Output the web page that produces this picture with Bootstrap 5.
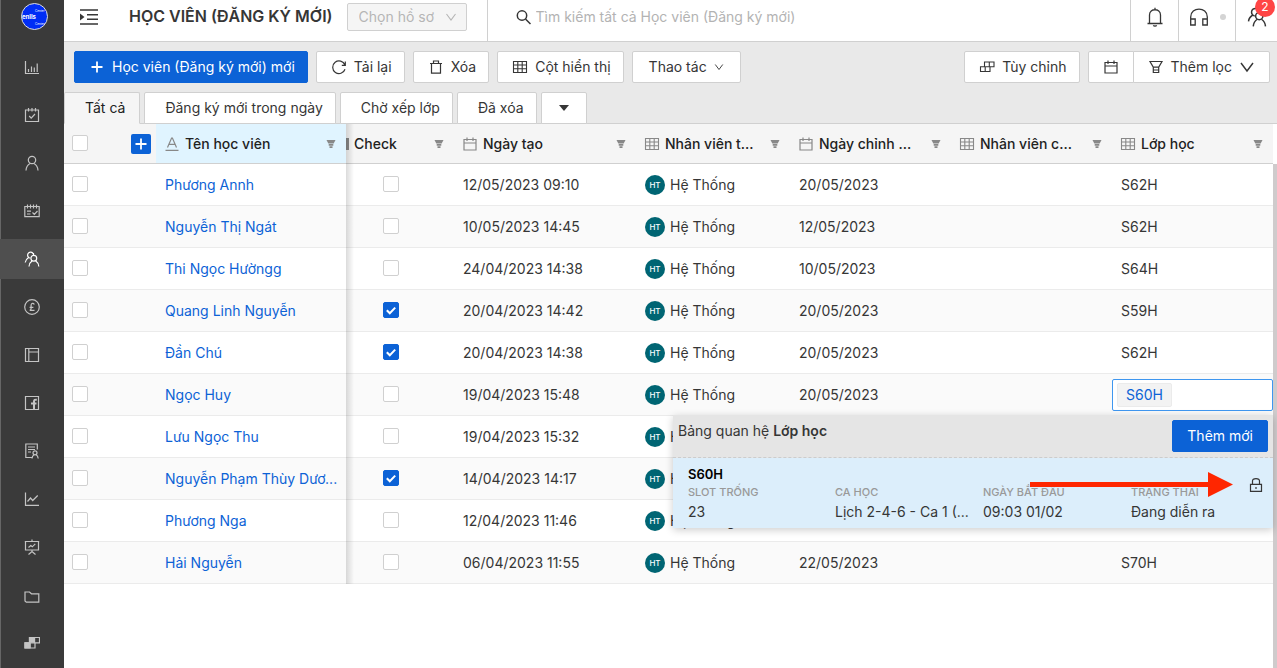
<!DOCTYPE html>
<html lang="vi">
<head>
<meta charset="utf-8">
<meta name="viewport" content="width=device-width, initial-scale=1">
<title>Học viên (Đăng ký mới)</title>
<link href="https://cdn.jsdelivr.net/npm/bootstrap@5.3.0/dist/css/bootstrap.min.css" rel="stylesheet">
<style>
  :root { --main-blue: #0c62d6; --line: #d0d0d0; --ink: #363636; }
  body { font-family: Inter, "Liberation Sans", sans-serif; font-size: 14px; line-height: 20px; color: var(--ink); background: #fff; }
  .ico { width: 16px; height: 16px; flex: none; fill: none; stroke: currentColor; stroke-width: 1.2; display: block; }
  .ico-sm { width: 10px; height: 10px; }
  .ico-lg { width: 20px; height: 20px; }
  .fill-rest { min-width: 0; }

  .side { width: 64px; background: #3a3a3a; box-shadow: inset 1px 0 #666; flex: none; }
  .side-logo { height: 47px; padding-top: 3px; flex: none; }
  .side-link { height: 40px; margin-bottom: 8px; color: #c4c4c4; flex: none; }
  .side-link.active { background: #4f4f4f; color: #fff; }
  .side-link:hover { color: #fff; }

  .top-bar { height: 42px; border-bottom: 1px solid var(--line); }
  .top-bar > * { padding-bottom: 8px; }
  .top-title { font-size: 16px; font-weight: 600; margin: 0 14px 0 31px; white-space: nowrap; }
  .record-pick { width: 120px; height: 28px; border: 1px solid var(--line); border-radius: 2px; background: #f5f5f5; color: #b5b5b5; appearance: none; padding: 0 11px; font-size: 14px; line-height: 24px; opacity: 1; }
  .pick-arrow { position: absolute; right: 10px; top: 8px; color: #b5b5b5; width: 12px; height: 12px; }
  .search-box { border: 0; outline: 0; color: var(--ink); background: none; }
  .search-box::placeholder { color: #b3b3b3; opacity: 1; }
  .cell-left { border-left: 1px solid var(--line); }
  .top-btn { background: none; border-width: 0 0 0 1px; border-style: solid; border-color: var(--line); color: var(--ink); padding: 0 0 8px; width: 48px; }
  .top-btn-wide { width: 57px; padding-left: 10px; gap: 11px; }
  .top-btn-last { width: 42px; }
  .count { position: absolute; top: -3px; right: 2px; width: 20px; height: 20px; border-radius: 50%; background: #ff4545; color: #fff; font-size: 12px; line-height: 20px; text-align: center; }
  .dot { width: 6px; height: 6px; border-radius: 50%; background: #d4d4d4; }

  .tools { background: #e9e9e9; padding: 9px 7px 0 10px; }
  .tabs { background: #e9e9e9; padding-top: 9px; border-bottom: 1px solid var(--line); }
  .btn.tool { --bs-btn-font-size: 14px; --bs-btn-line-height: 20px; --bs-btn-padding-y: 5px; --bs-btn-padding-x: 14px; --bs-btn-border-radius: 2px; --bs-btn-bg: #fff; --bs-btn-color: var(--ink); --bs-btn-border-color: var(--line); display: inline-flex; align-items: center; gap: 7px; white-space: nowrap; height: 32px; }
  .btn.tool-main { --bs-btn-bg: var(--main-blue); --bs-btn-color: #fff; --bs-btn-border-color: var(--main-blue); }
  .tools > .btn.tool { padding-right: 12px; }
  .tab { height: 32px; margin-bottom: -1px; padding: 0 12px 0 20px; background: #fff; border: 1px solid var(--line); border-radius: 2px 2px 0 0; color: var(--ink); white-space: nowrap; }
  .tab.active { background: #f5f5f5; border-bottom-color: #f5f5f5; color: #222; padding-right: 14px; }

  .data { table-layout: fixed; width: 100%; border-collapse: separate; border-spacing: 0; }
  .data th { height: 40px; padding: 0 10px 0 8px; background: #f5f5f5; border-bottom: 1px solid var(--line); color: #222; font-weight: 500; white-space: nowrap; }
  .th-in { display: flex; align-items: center; gap: 5px; }
  .data td { height: 42px; padding: 0 9px; border-bottom: 1px solid #ebebeb; white-space: nowrap; position: relative; }
  .data tbody tr:nth-child(even) td { background: #fafafa; }
  .data .pinned { position: relative; }
  .data .pinned::after { content: ""; position: absolute; left: 100%; top: 0; bottom: -1px; width: 8px; background: linear-gradient(to right, rgba(0,0,0,.14), rgba(0,0,0,0)); z-index: 1; }
  .data th.pinned { background: #e0f4ff; }
  .data th.pick-all { padding-right: 5px; }
  .data td.check-cell { padding-left: 37px; }
  .data td a { color: var(--main-blue); text-decoration: none; }
  .data th .ico { color: #888; }
  .tick { appearance: none; width: 16px; height: 16px; border: 1px solid var(--line); border-radius: 2px; background: #fff; display: block; margin: 0 0 1px; }
  .tick:checked { border-color: var(--main-blue); background: var(--main-blue) url("data:image/svg+xml,%3Csvg xmlns='http://www.w3.org/2000/svg' viewBox='0 0 14 14'%3E%3Cpath d='M2.8 7.2l3 3L11.200 4.600' fill='none' stroke='white' stroke-width='2'/%3E%3C/svg%3E"); }
  .add-col { width: 20px; height: 20px; padding: 2px; background: var(--main-blue); color: #fff; border: 0; border-radius: 2px; }
  .data th .add-col .ico { color: #fff; }
  .cut { width: 3px; height: 12px; background: #888; }
  .who { width: 20px; height: 20px; border-radius: 50%; background: #006573; color: #fff; font-size: 8px; font-weight: 500; line-height: 20px; text-align: center; margin-right: 5px; }
  .thumb { width: 4px; flex: none; background: #cfcbcc; margin-top: 40px; }

  .data td.editing { padding: 0; }
  .edit-box { height: 32px; border: 1px solid #3f97f0; border-radius: 2px; background: #fff; padding: 3px 4px; }
  .pill { height: 24px; padding: 0 8px; border: 1px solid #ebebeb; border-radius: 2px; background: #f3f3f3; color: var(--main-blue); line-height: 22px; }
  .relation { position: absolute; right: 0; top: 100%; width: 600px; z-index: 5; box-shadow: 0 2px 8px rgba(0,0,0,.2); }
  .relation-top { height: 43px; padding: 5px; background: #e5e5e5; border-bottom: 1px dashed #ccc; }
  .relation-title { line-height: 22px; }
  .relation-item { height: 70px; padding: 6px 0 0 15px; background: #dceefb; position: relative; }
  .item-name { font-size: 13px; font-weight: 600; color: #000; }
  .item-grid { display: grid; grid-template-columns: 147px 148px 148px 1fr; }
  .item-label { font-size: 11px; line-height: 16px; font-weight: 500; color: #999; text-transform: uppercase; }
  .item-value { line-height: 24px; }
  .lock { position: absolute; right: 9px; top: 19px; }
  .pointer { position: absolute; right: 40px; top: 14px; width: 203px; height: 25px; }
</style>
</head>
<body>
<svg class="d-none" aria-hidden="true">
  <symbol id="i-bars" viewBox="0 0 16 16"><path d="M1.500 2v12.500H15M4.500 10v3M7.500 7.500V13M10.300 8.500V13M13.200 4.500V13"/></symbol>
  <symbol id="i-calcheck" viewBox="0 0 16 16"><path d="M1.500 3h13v11.500h-13zM4.500 1v3.500M8 1v3.500M11.500 1v3.500M5.200 9l2 2.200L11 7"/></symbol>
  <symbol id="i-user" viewBox="0 0 16 16"><circle cx="8" cy="5" r="3.700"/><path d="M2 15.500c.2-4 2.200-6 4.200-7M14 15.500c-.2-4-2.200-6-4.200-7"/></symbol>
  <symbol id="i-sched" viewBox="0 0 16 16"><path d="M.8 3.500h14.400v10.200H.8zM3.500 1.500v4M6.500 1.500v4M9.500 1.500v4M12.500 1.500v4M3 8.200h4M3 11h3.500M8.500 9.500l1.800 1.800L13.500 8"/></symbol>
  <symbol id="i-users" viewBox="0 0 16 16"><circle cx="9.800" cy="7.200" r="2.900"/><path d="M5 15.500c.2-2.600 1.500-4.500 3.200-5.700M14.800 15.500c-.2-2.600-1.500-4.500-3.200-5.700M9.200 2.600C8 .8 6 .8 4.800 1.700 3.300 2.900 3.200 5 4.600 6.400 2.700 7.600 1.500 9 1.200 11.500M9.500 4V2M4.600 6.400c.6.500 1 .7 1.600.8"/></symbol>
  <symbol id="i-pound" viewBox="0 0 16 16"><circle cx="8" cy="8" r="7.300"/><path d="M10.300 5.400C9.600 4 7.200 4 7.100 6v3.500c0 1-.4 1.500-1.300 1.900h4.700M5.600 8.300h3.800"/></symbol>
  <symbol id="i-layout" viewBox="0 0 16 16"><path d="M1.500 1.500h13v13h-13zM4.800 1.500v13M4.800 5h9.700"/></symbol>
  <symbol id="i-fb" viewBox="0 0 16 16"><path d="M1.500 1.500h13v13h-13z"/><path d="M10 14V6.500c0-1.500.8-2 2.800-1.800M7 8.500h5.500" stroke-width="2"/></symbol>
  <symbol id="i-cert" viewBox="0 0 16 16"><path d="M8 14.500H1.800V1h11.500v5.500M4 4h7M4 6.500h7M4 9h3"/><circle cx="11" cy="9.800" r="2"/><path d="M8 15.500c.2-2 1-3 2-3.700M14.200 15.500c-.2-2-1-3-2-3.700"/></symbol>
  <symbol id="i-line" viewBox="0 0 16 16"><path d="M1.500 1.500v12.800H15M3.500 10.500l3-3.500 2.200 2.500 5-5"/></symbol>
  <symbol id="i-board" viewBox="0 0 16 16"><path d="M.8 2.500h14.400M1.500 2.500v8.500h13V2.500M8 .5v2M8 11v2M4.500 15.500L8 12.500l3.500 3M4.500 8.500l2.300-2 1.500 1.300 3-3"/></symbol>
  <symbol id="i-folder" viewBox="0 0 16 16"><path d="M1 5h4.500L7.500 6.800h7.300v8.400H2.300L1 14z"/></symbol>
  <symbol id="i-blocks" viewBox="0 0 16 16"><path d="M5.500 2.500h10v5.300h-4.500v5.200h-10V7.800h4.500zM10.500 2.500v5.300M6 7.800v5.200"/><path d="M5.500 2.500h5v5.300h-5zM1 7.800h5v5.200H1z" fill="currentColor"/></symbol>
  <symbol id="i-custom" viewBox="0 0 16 16"><path d="M5.500 3h9.500v4.800h-4v4.700H1.500V7.800h4zM10.300 3v4.800M6.200 7.800v4.700M5.500 7.800H11" stroke-width="1.100"/></symbol>
  <symbol id="i-plus" viewBox="0 0 16 16"><path d="M8 2.500v11M2.500 8h11" stroke-width="1.800"/></symbol>
  <symbol id="i-reload" viewBox="0 0 16 16"><path d="M13.900 6A6.300 6.300 0 1 0 14 10.200M14.300 2.500v3.800h-3.500"/></symbol>
  <symbol id="i-trash" viewBox="0 0 16 16"><path d="M2 4.500h12M3.500 4.500v9.700h9V4.500M5.500 4.200V2h5v2.200"/></symbol>
  <symbol id="i-grid" viewBox="0 0 16 16"><path d="M1.500 2.500h13v11h-13zM1.500 6h13M1.500 9.800h13M5.800 2.500v11M10.200 2.500v11" stroke-width="1.100"/></symbol>
  <symbol id="i-cal" viewBox="0 0 16 16"><path d="M2 3.500h12v10.500H2zM2 7h12M5 1.500v3.500M11 1.500v3.500"/></symbol>
  <symbol id="i-down" viewBox="0 0 12 12"><path d="M1.500 3L6 9l4.500-6" stroke-width="1.100"/></symbol>
  <symbol id="i-funnel" viewBox="0 0 16 16"><path d="M2 2.500h12l-3.300 5.700v5.300H5.300V8.200zM5.300 8.200h5.400M5.300 11h5.400"/></symbol>
  <symbol id="i-filter" viewBox="0 0 10 10"><path d="M.5 1h9L7.700 4.500H2.300zM2.700 5h4.600v1.800H2.700zM3.500 7.200h3V9h-3z" fill="#888" stroke="none"/></symbol>
  <symbol id="i-lock" viewBox="0 0 16 16"><path d="M2.500 7.300h11v7h-11zM4.500 7V4c0-3.200 7-3.200 7 0v3M8 10v2"/></symbol>
  <symbol id="i-text" viewBox="0 0 16 16"><path d="M1.500 14.300h13M3.500 11.500L7.600 2h.8l4.100 9.500M5 8.300h6"/></symbol>
</svg>

<div class="d-flex vh-100 overflow-hidden">
  <nav class="side d-flex flex-column" aria-label="Điều hướng">
    <a class="side-logo d-flex justify-content-center align-items-start mb-0" href="#" aria-label="enlls">
      <svg class="ms-1" width="27" height="27" viewBox="0 0 27 27"><circle cx="13.500" cy="13.500" r="13" fill="#002df5" stroke="#ddd"/><text x="1" y="16" font-size="6" font-weight="700" fill="#fff">enlls</text><text x="14" y="8.500" font-size="3" fill="#fff">Center</text><text x="14" y="21.500" font-size="3" fill="#fff">Center</text></svg>
    </a>
    <a class="side-link d-flex align-items-center justify-content-center" href="#" aria-label="Thống kê"><svg class="ico"><use href="#i-bars"/></svg></a>
    <a class="side-link d-flex align-items-center justify-content-center" href="#" aria-label="Công việc"><svg class="ico"><use href="#i-calcheck"/></svg></a>
    <a class="side-link d-flex align-items-center justify-content-center" href="#" aria-label="Cá nhân"><svg class="ico"><use href="#i-user"/></svg></a>
    <a class="side-link d-flex align-items-center justify-content-center" href="#" aria-label="Lịch"><svg class="ico"><use href="#i-sched"/></svg></a>
    <a class="side-link active d-flex align-items-center justify-content-center" href="#" aria-label="Học viên"><svg class="ico"><use href="#i-users"/></svg></a>
    <a class="side-link d-flex align-items-center justify-content-center" href="#" aria-label="Học phí"><svg class="ico"><use href="#i-pound"/></svg></a>
    <a class="side-link d-flex align-items-center justify-content-center" href="#" aria-label="Bố cục"><svg class="ico"><use href="#i-layout"/></svg></a>
    <a class="side-link d-flex align-items-center justify-content-center" href="#" aria-label="Facebook"><svg class="ico"><use href="#i-fb"/></svg></a>
    <a class="side-link d-flex align-items-center justify-content-center" href="#" aria-label="Chứng chỉ"><svg class="ico"><use href="#i-cert"/></svg></a>
    <a class="side-link d-flex align-items-center justify-content-center" href="#" aria-label="Biểu đồ"><svg class="ico"><use href="#i-line"/></svg></a>
    <a class="side-link d-flex align-items-center justify-content-center" href="#" aria-label="Báo cáo"><svg class="ico"><use href="#i-board"/></svg></a>
    <a class="side-link d-flex align-items-center justify-content-center" href="#" aria-label="Tài liệu"><svg class="ico"><use href="#i-folder"/></svg></a>
    <a class="side-link d-flex align-items-center justify-content-center" href="#" aria-label="Ứng dụng"><svg class="ico"><use href="#i-blocks"/></svg></a>
  </nav>

  <main class="fill-rest d-flex flex-column flex-grow-1">
    <header class="top-bar d-flex flex-shrink-0">
      <div class="d-flex align-items-center ps-3">
        <button class="btn p-0 border-0 rounded-0" type="button" aria-label="Mở menu"><svg width="18" height="16" viewBox="0 0 18 16" class="d-block"><path d="M0 1h18M7 5.700h11M7 10.300h11M0 15h18" stroke="#363636" stroke-width="1.500"/><path d="M0 4.500L4.500 8 0 11.500z" fill="#363636"/></svg></button>
        <h1 class="top-title">HỌC VIÊN (ĐĂNG KÝ MỚI)</h1>
        <div class="position-relative me-3">
          <label class="visually-hidden" for="pick">Hồ sơ</label>
          <select class="record-pick d-block" id="pick" disabled><option>Chọn hồ sơ</option></select>
          <svg class="ico pick-arrow"><use href="#i-down"/></svg>
        </div>
      </div>
      <div class="cell-left d-flex align-items-center flex-grow-1 ms-1 ps-4">
        <label class="ms-1 me-1" for="find" aria-label="Tìm kiếm"><svg class="ico"><circle cx="6" cy="6.500" r="4.700" stroke-width="1.500"/><path d="M9.500 10l5 5" stroke-width="1.500"/></svg></label>
        <input class="search-box flex-grow-1 p-0" id="find" type="text" placeholder="Tìm kiếm tất cả Học viên (Đăng ký mới)">
      </div>
      <button class="top-btn" type="button" aria-label="Thông báo"><svg width="16" height="20" viewBox="0 0 16 20" class="d-block mx-auto" fill="none" stroke="currentColor" stroke-width="1.300"><path d="M.5 16.500h15M2.500 16.500V8c0-7 11-7 11 0v8.500M8 2.800V.8M6.300 18.300c.7 1 2.700 1 3.400 0"/></svg></button>
      <button class="top-btn top-btn-wide d-flex align-items-center" type="button" aria-label="Hỗ trợ"><svg width="20" height="18" viewBox="0 0 20 18" fill="none" stroke="currentColor" stroke-width="1.300"><path d="M1.700 17V9c0-10.500 16.600-10.500 16.600 0v8M1.700 11h4.500v6H1.700zM13.800 11h4.500v6h-4.500z"/></svg><span class="dot"></span></button>
      <button class="top-btn top-btn-last position-relative" type="button" aria-label="2 yêu cầu"><svg class="ico ico-lg mx-auto"><use href="#i-users"/></svg><span class="count">2</span></button>
    </header>

    <div class="tools d-flex gap-2">
      <button class="btn tool tool-main" type="button"><svg class="ico"><use href="#i-plus"/></svg>Học viên (Đăng ký mới) mới</button>
      <button class="btn tool" type="button"><svg class="ico"><use href="#i-reload"/></svg>Tải lại</button>
      <button class="btn tool" type="button"><svg class="ico"><use href="#i-trash"/></svg>Xóa</button>
      <button class="btn tool" type="button"><svg class="ico"><use href="#i-grid"/></svg>Cột hiển thị</button>
      <button class="btn tool px-3" type="button">Thao tác<svg class="ico ico-sm"><use href="#i-down"/></svg></button>
      <button class="btn tool ms-auto" type="button"><svg class="ico"><use href="#i-custom"/></svg>Tùy chỉnh</button>
      <div class="btn-group">
        <button class="btn tool" type="button" aria-label="Chọn ngày"><svg class="ico"><use href="#i-cal"/></svg></button>
        <button class="btn tool" type="button"><svg class="ico"><use href="#i-funnel"/></svg>Thêm lọc<svg class="ico"><use href="#i-down"/></svg></button>
      </div>
    </div>
    <div class="tabs d-flex gap-1">
      <button class="tab active" type="button">Tất cả</button>
      <button class="tab" type="button">Đăng ký mới trong ngày</button>
      <button class="tab" type="button">Chờ xếp lớp</button>
      <button class="tab" type="button">Đã xóa</button>
      <button class="tab px-3" type="button" aria-label="Thêm tab"><svg width="12" height="6" viewBox="0 0 12 6" class="d-block"><path d="M1 0h10L6 6z" fill="#363636"/></svg></button>
    </div>

    <div class="d-flex flex-grow-1">
      <div class="fill-rest flex-grow-1">
        <table class="data">
          <colgroup><col style="width:92px"><col style="width:190px"><col style="width:108px"><col style="width:182px"><col style="width:154px"><col style="width:161px"><col style="width:161px"><col></colgroup>
          <thead>
            <tr>
              <th class="pick-all"><div class="d-flex align-items-center justify-content-between"><input class="tick" type="checkbox" aria-label="Chọn tất cả"><button class="add-col" type="button" aria-label="Thêm"><svg class="ico"><use href="#i-plus"/></svg></button></div></th>
              <th class="pinned"><div class="th-in"><svg class="ico"><use href="#i-text"/></svg>Tên học viên<svg class="ico ico-sm ms-auto"><use href="#i-filter"/></svg></div></th>
              <th class="ps-0"><div class="th-in"><span class="cut"></span>Check<svg class="ico ico-sm ms-auto"><use href="#i-filter"/></svg></div></th>
              <th><div class="th-in"><svg class="ico"><use href="#i-cal"/></svg>Ngày tạo<svg class="ico ico-sm ms-auto"><use href="#i-filter"/></svg></div></th>
              <th><div class="th-in"><svg class="ico"><use href="#i-grid"/></svg>Nhân viên t...<svg class="ico ico-sm ms-auto"><use href="#i-filter"/></svg></div></th>
              <th><div class="th-in"><svg class="ico"><use href="#i-cal"/></svg>Ngày chỉnh ...<svg class="ico ico-sm ms-auto"><use href="#i-filter"/></svg></div></th>
              <th><div class="th-in"><svg class="ico"><use href="#i-grid"/></svg>Nhân viên c...<svg class="ico ico-sm ms-auto"><use href="#i-filter"/></svg></div></th>
              <th><div class="th-in"><svg class="ico"><use href="#i-grid"/></svg>Lớp học<svg class="ico ico-sm ms-auto"><use href="#i-filter"/></svg></div></th>
            </tr>
          </thead>
          <tbody id="rows"></tbody>
        </table>
      </div>
      <div class="thumb"></div>
    </div>
  </main>
</div>

<template id="relation">
  <div class="edit-box d-flex"><span class="pill">S60H</span></div>
  <div class="relation">
    <div class="relation-top d-flex justify-content-between align-items-start">
      <span class="relation-title">Bảng quan hệ <b class="fw-semibold">Lớp học</b></span>
      <button class="btn tool tool-main" type="button">Thêm mới</button>
    </div>
    <div class="relation-item">
      <div class="item-name">S60H</div>
      <div class="item-grid">
        <div><div class="item-label">Slot trống</div><div class="item-value">23</div></div>
        <div><div class="item-label">Ca học</div><div class="item-value">Lịch 2-4-6 - Ca 1 (...</div></div>
        <div><div class="item-label">Ngày bắt đầu</div><div class="item-value">09:03 01/02</div></div>
        <div><div class="item-label">Trạng thái</div><div class="item-value">Đang diễn ra</div></div>
      </div>
      <svg class="ico lock"><use href="#i-lock"/></svg>
      <svg class="pointer" viewBox="0 0 203 25"><path d="M0 10h178V0l25 12.500L178 25V15H0z" fill="#ff2600"/></svg>
    </div>
  </div>
</template>

<script src="https://cdn.jsdelivr.net/npm/bootstrap@5.3.0/dist/js/bootstrap.bundle.min.js"></script>
<script>
  // name, checked, created, modified, class
  const students = [
    ["Phương Annh", 0, "12/05/2023 09:10", "20/05/2023", "S62H"],
    ["Nguyễn Thị Ngát", 0, "10/05/2023 14:45", "12/05/2023", "S62H"],
    ["Thi Ngọc Hườngg", 0, "24/04/2023 14:38", "10/05/2023", "S64H"],
    ["Quang Linh Nguyễn", 1, "20/04/2023 14:42", "20/05/2023", "S59H"],
    ["Đần Chú", 1, "20/04/2023 14:38", "20/05/2023", "S62H"],
    ["Ngọc Huy", 0, "19/04/2023 15:48", "20/05/2023", "S60H"],
    ["Lưu Ngọc Thu", 0, "19/04/2023 15:32", "", ""],
    ["Nguyễn Phạm Thùy Dươ...", 1, "14/04/2023 14:17", "", ""],
    ["Phương Nga", 0, "12/04/2023 11:46", "", ""],
    ["Hải Nguyễn", 0, "06/04/2023 11:55", "22/05/2023", "S70H"]
  ];
  const body = document.getElementById("rows");
  students.forEach(([name, on, made, changed, group], i) => {
    const tr = document.createElement("tr");
    tr.innerHTML = `
      <td class="ps-2"><input class="tick" type="checkbox" aria-label="Chọn ${name}"></td>
      <td class="pinned"><a href="#">${name}</a></td>
      <td class="check-cell"><input class="tick" type="checkbox" aria-label="Check ${name}" ${on ? "checked" : ""}></td>
      <td>${made}</td>
      <td><div class="d-flex align-items-center"><span class="who">HT</span>Hệ Thống</div></td>
      <td>${changed}</td>
      <td></td>
      <td>${group}</td>`;
    if (i === 5) {
      tr.lastElementChild.className = "editing";
      tr.lastElementChild.replaceChildren(document.getElementById("relation").content.cloneNode(true));
    }
    body.append(tr);
  });
</script>
</body>
</html>
